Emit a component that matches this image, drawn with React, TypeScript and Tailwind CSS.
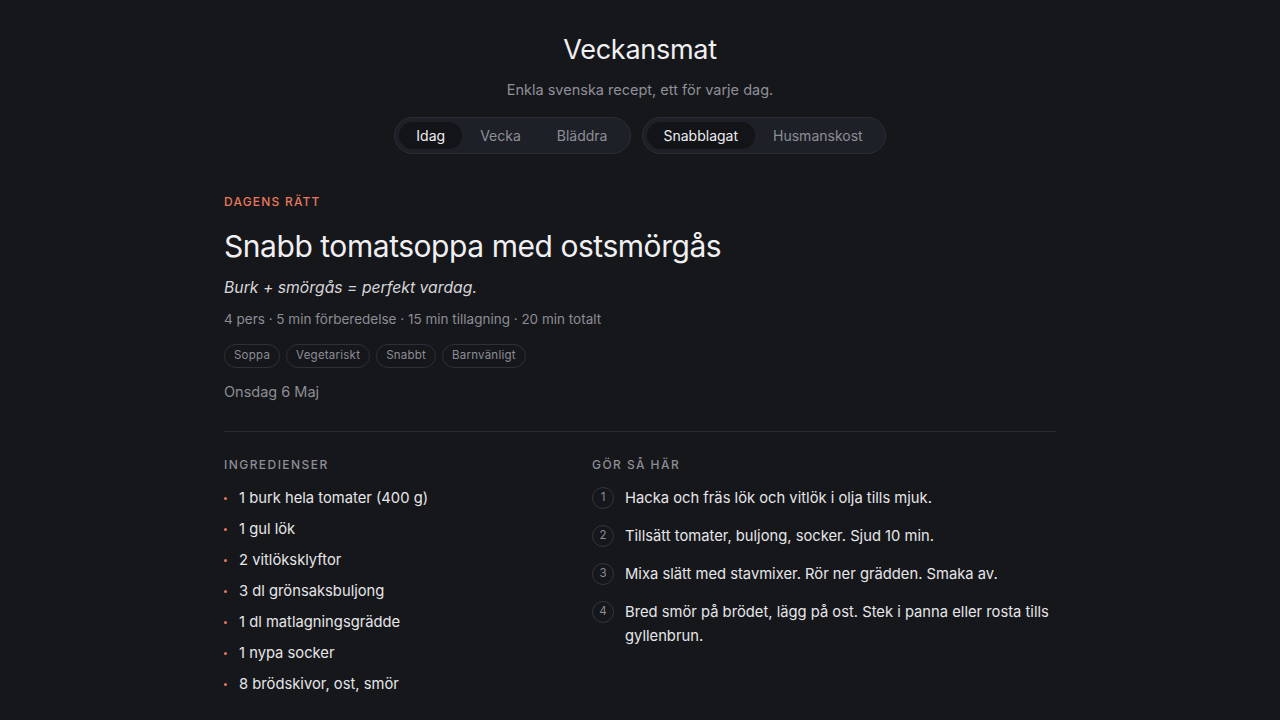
import React from "react";

const ingredients = [
  "1 burk hela tomater (400 g)",
  "1 gul lök",
  "2 vitlöksklyftor",
  "3 dl grönsaksbuljong",
  "1 dl matlagningsgrädde",
  "1 nypa socker",
  "8 brödskivor, ost, smör",
];

const steps = [
  "Hacka och fräs lök och vitlök i olja tills mjuk.",
  "Tillsätt tomater, buljong, socker. Sjud 10 min.",
  "Mixa slätt med stavmixer. Rör ner grädden. Smaka av.",
  "Bred smör på brödet, lägg på ost. Stek i panna eller rosta tills gyllenbrun.",
];

const tags = ["Soppa", "Vegetariskt", "Snabbt", "Barnvänligt"];

function Seg({ items, active }: { items: string[]; active: number }) {
  return (
    <div className="flex items-center rounded-full border border-[#2b2d35] bg-[#1e2027] p-1">
      {items.map((it, i) => (
        <div
          key={it}
          className={
            i === active
              ? "h-[27px] rounded-full bg-[#131418] px-[17px] flex items-center text-[14px] text-[#eeeef0]"
              : "h-[27px] rounded-full px-[18px] flex items-center text-[14px] text-[#8c8e96]"
          }
        >
          {it}
        </div>
      ))}
    </div>
  );
}

export default function App() {
  return (
    <div
      className="min-h-screen w-full bg-[#16171b] text-[#e6e6e9]"
      style={{ fontFamily: "Inter, 'Noto Sans', sans-serif" }}
    >
      <div className="mx-auto w-[832px] pt-[31px]">
        <header className="flex flex-col items-center">
          <h1 className="text-[27px] leading-[38px] font-normal tracking-[-0.01em] text-[#f0f0f2]">Veckansmat</h1>
          <p className="mt-[11px] text-[14.5px] leading-[20px] text-[#8f9098]">
            Enkla svenska recept, ett för varje dag.
          </p>
          <div className="mt-[17px] flex gap-[11px]">
            <Seg items={["Idag", "Vecka", "Bläddra"]} active={0} />
            <Seg items={["Snabblagat", "Husmanskost"]} active={0} />
          </div>
        </header>

        <section className="mt-[40px]">
          <div className="text-[12px] leading-[16px] font-medium tracking-[0.1em] text-[#e8775d]">
            DAGENS RÄTT
          </div>
          <h2 className="mt-[16px] text-[30px] leading-[40px] font-normal tracking-[-0.015em] text-[#f0f0f2]">
            Snabb tomatsoppa med ostsmörgås
          </h2>
          <p className="mt-[10px] text-[15.75px] leading-[24px] italic text-[#d6d6da]">
            Burk + smörgås = perfekt vardag.
          </p>
          <p className="mt-[9px] text-[13.5px] leading-[20px] text-[#8c8d95]">
            4 pers · 5 min förberedelse · 15 min tillagning · 20 min totalt
          </p>
          <div className="mt-[15px] flex gap-[6px]">
            {tags.map((t) => (
              <span
                key={t}
                className="h-[24px] rounded-full border border-[#2e3038] px-[9px] flex items-center text-[11.5px] tracking-[0.02em] text-[#8c8d95]"
              >
                {t}
              </span>
            ))}
          </div>
          <p className="mt-[13px] text-[14.5px] leading-[22px] text-[#8c8d95]">Onsdag 6 Maj</p>
        </section>

        <div className="mt-[28px] h-px bg-[#2a2c33]" />

        <section className="mt-[25px] grid grid-cols-[320px_1fr] gap-[48px]">
          <div>
            <h3 className="text-[12px] leading-[16px] font-medium tracking-[0.12em] text-[#8c8d95]">
              INGREDIENSER
            </h3>
            <ul className="mt-[13px] flex flex-col gap-[7px]">
              {ingredients.map((ing) => (
                <li key={ing} className="flex items-center text-[14.75px] leading-[24px] text-[#e6e6e9]">
                  <span className="mr-[12px] h-[3px] w-[3px] rounded-full bg-[#e8775d]" />
                  {ing}
                </li>
              ))}
            </ul>
          </div>
          <div>
            <h3 className="text-[12px] leading-[16px] font-medium tracking-[0.12em] text-[#8c8d95]">
              GÖR SÅ HÄR
            </h3>
            <ol className="mt-[13px] flex flex-col gap-[14px]">
              {steps.map((s, i) => (
                <li key={i} className="flex items-start">
                  <span className="mt-[1px] mr-[11px] flex h-[22px] w-[22px] shrink-0 items-center justify-center rounded-full border border-[#33353d] text-[11.5px] text-[#8c8d95]">
                    {i + 1}
                  </span>
                  <span className="text-[14.75px] leading-[24px] text-[#e6e6e9]">{s}</span>
                </li>
              ))}
            </ol>
          </div>
        </section>
      </div>
    </div>
  );
}
